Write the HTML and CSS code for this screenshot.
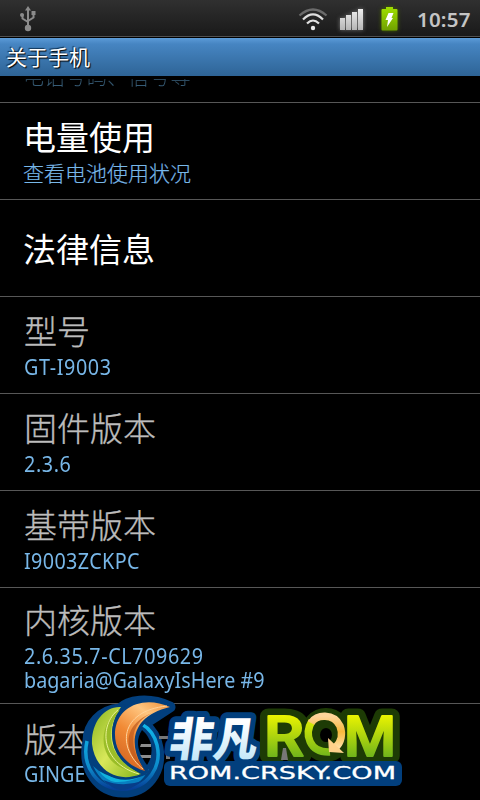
FILE: index.html
```html
<!DOCTYPE html>
<html lang="zh-CN">
<head>
<meta charset="utf-8">
<title>关于手机</title>
<link rel="stylesheet" href="styles.css">
</head>
<body>
<div class="phone">
  <header class="status">
    <svg class="usb" width="18" height="28" viewBox="0 0 18 28">
      <g fill="none" stroke="#8b8b8b" stroke-width="2"><path d="M9 5V23M3.500 10v4.500L9 18M14.500 9v4.500L9 17"/></g>
      <g fill="#8b8b8b"><path d="M9 2l3 4.500H6z"/><circle cx="9" cy="24" r="3.200"/><circle cx="3" cy="11" r="2"/><path d="M12.500 7h4v4h-4z"/></g>
    </svg>
    <svg class="wifi" width="30" height="24" viewBox="0 0 30 24">
      <g fill="none" stroke-width="2.200"><path stroke="#6b6b6b" d="M1.500 7.500Q15-4.500 28.500 7.500"/><path stroke="#e0e0e0" d="M5 11.500Q15 1.500 25 11.500M9 15.500Q15 9.500 21 15.500"/></g><circle cx="15" cy="20" r="2.200" fill="#e8e8e8"/>
    </svg>
    <svg class="signal" width="24" height="23" viewBox="0 0 24 23"><path fill="url(#bar)" d="M0 11h5v12H0zM6 8h5v15H6zM12 5h5v18h-5zM18 2h5v21h-5z"/><defs><linearGradient id="bar" x2="0" y2="1"><stop stop-color="#eee"/><stop offset="1" stop-color="#b5b5b5"/></linearGradient></defs></svg>
    <svg class="battery" width="17" height="24" viewBox="0 0 17 24"><defs><linearGradient id="bat" x2="0" y2="1"><stop stop-color="#a0e000"/><stop offset="1" stop-color="#6fa000"/></linearGradient></defs><path fill="url(#bat)" d="M5 0h7v2h3.500q1 0 1 1v19.500q0 1-1 1h-14q-1 0-1-1V3q0-1 1-1H5z"/><path fill="#fff" d="M7.500 6h5l-2 5H12l-6 9 1-7H4.500z"/></svg>
    <span class="clock">10:57</span>
  </header>
  <h1 class="title">关于手机</h1>
  <main class="list">
    <section class="row peek"><p class="sub cjk">电话号码、信号等</p></section>
    <section class="row"><h2 class="on">电量使用</h2><p class="sub cjk">查看电池使用状况</p></section>
    <section class="row single"><h2 class="on">法律信息</h2></section>
    <section class="row"><h2>型号</h2><p class="sub wide">GT-I9003</p></section>
    <section class="row"><h2>固件版本</h2><p class="sub wide">2.3.6</p></section>
    <section class="row"><h2>基带版本</h2><p class="sub mid">I9003ZCKPC</p></section>
    <section class="row kernel"><h2>内核版本</h2><p class="sub"><span class="wide">2.6.35.7-CL709629</span><br>bagaria@GalaxyIsHere #9</p></section>
    <section class="row last"><h2>版本</h2><p class="sub">GINGE</p></section>
  </main>
  <svg class="mark" width="330" height="110" viewBox="80 690 330 110">
    <defs>
      <linearGradient id="green" x2="1" y2="1"><stop stop-color="#89b51d"/><stop offset=".5" stop-color="#d8e85a"/><stop offset="1" stop-color="#86b51b"/></linearGradient>
      <linearGradient id="orange" x1="1" y1="0" x2=".4" y2="1"><stop stop-color="#ee8d35"/><stop offset=".3" stop-color="#ffc680"/><stop offset=".65" stop-color="#f18a35"/><stop offset="1" stop-color="#d86a24"/></linearGradient>
      <linearGradient id="ring" x2="0" y2="1"><stop stop-color="#10b5ea"/><stop offset=".65" stop-color="#0d8dcc"/><stop offset="1" stop-color="#063e96"/></linearGradient>
      <linearGradient id="ice" x2="0" y2="1"><stop offset=".3" stop-color="#fff"/><stop offset="1" stop-color="#b5e2f7"/></linearGradient>
      <linearGradient id="lime" gradientUnits="userSpaceOnUse" x1="0" y1="714" x2="0" y2="757"><stop stop-color="#eef500"/><stop offset="1" stop-color="#70b51b"/></linearGradient>
      <linearGradient id="gold" x2="0" y2="1"><stop stop-color="#ffd49a"/><stop offset=".5" stop-color="#f7b83c"/><stop offset="1" stop-color="#ffdda0"/></linearGradient>
    </defs>
    <g fill="#023f7d" stroke="#023f7d" stroke-width="11" stroke-linejoin="round">
      <path d="M88 741C82 770 99 792 123 792 147 792 162 772 158 748 156 735 149 728 144 724L170 707C148 697 128 701 120 709 101 710 88 725 88 741z"/>
    </g>
    <path fill="#000" d="M142 730C134 742 139 754 147 765 155 753 152 738 142 730z"/>
    <path fill="#8d8d8d" d="M141 744h10v3h-11zM140 755h11v3h-9z"/>
    <path fill="#777" d="M159 736h9v3h-9zM166 755h4v4h-4z"/>
    <path fill="none" stroke="url(#ring)" stroke-width="3.500" d="M87 741C81 768 99 789 122 789 149 789 162 766 157 745 155 736 149 728 143 725"/>
    <path fill="#087fc0" d="M93 766Q119 791 149 769Q140 787 122 789Q103 787 93 766z"/>
    <path fill="#10b2dd" d="M99 771Q122 785 146 774Q130 783 115 782Q105 780 99 771z"/>
    <path fill="#073d89" d="M103 780Q122 788 142 781Q132 790 120 790Q111 788 103 780z"/>
    <path fill="url(#green)" stroke="#023f7d" stroke-width="5" paint-order="stroke" d="M121 707C104 706 91 723 92 744 95 769 116 784 141 774 114 761 103 733 121 707z"/>
    <path fill="#9abd28" d="M120 710C104 729 108 758 139 773Q115 769 108 756C98 739 106 717 120 710z"/>
    <path fill="none" stroke="#eaf395" d="M118 710C99 725 100 763 139 774"/>
    <path fill="url(#orange)" stroke="#023f7d" stroke-width="6" paint-order="stroke" stroke-linejoin="round" d="M170 707C144 695 117 706 115 732 114 753 128 766 145 771 127 745 131 716 170 707z"/>
    <path fill="#b95318" opacity=".65" d="M155 712C132 720 125 743 145 771 123 753 120 724 155 712z"/>
    <path fill="none" stroke="#ffd39b" d="M167 706C119 711 117 748 143 769"/>
    <g class="chinese">
      <text x="168" y="756" textLength="88" lengthAdjust="spacingAndGlyphs" class="brand edge" transform="skewX(-8)">非凡</text>
    </g>
    <text class="rom rim"><tspan x="264" y="756" textLength="40" lengthAdjust="spacingAndGlyphs">R</tspan><tspan x="344" y="756" textLength="52" lengthAdjust="spacingAndGlyphs">M</tspan></text>
    <ellipse cx="326" cy="735" rx="16" ry="17" fill="none" stroke="#1d3b05" stroke-width="20"/>
    <text class="rom"><tspan x="264" y="756" textLength="40" lengthAdjust="spacingAndGlyphs">R</tspan><tspan x="344" y="756" textLength="52" lengthAdjust="spacingAndGlyphs">M</tspan></text>
    <path fill="none" stroke="url(#lime)" stroke-width="7.500" d="M312 721C304 734 309 753 330 752"/>
    <path fill="none" stroke="url(#gold)" stroke-width="7.500" d="M311 723C316 714 334 713 340 726 343 734 341 742 336 747"/>
    <path fill="#ffd18a" d="M328 738l16 15-15-1z"/>
    <path fill="#777" d="M283 748h3l2 12h-7z"/>
    <rect x="164" y="761" width="238" height="25" rx="6" fill="#023f7d"/>
    <text x="169" y="779" class="site" textLength="227" lengthAdjust="spacingAndGlyphs">ROM.CRSKY.COM</text>
  </svg>
</div>
</body>
</html>
```
FILE: styles.css
```css
* { box-sizing: border-box; }
body { margin: 0; background: #000; }
h1, h2, p { margin: 0; font-weight: 400; }
.phone { position: relative; width: 480px; height: 800px; overflow: hidden; display: flex; flex-direction: column; background: #000; font-family: "Noto Sans", "Noto Sans CJK SC", sans-serif; }
.status { height: 38px; flex: none; display: flex; align-items: flex-start; background: linear-gradient(#303030, #1a1a1a 35px, #1a1a1a); border-bottom: 1px solid #000; box-shadow: inset 0 -1px #505050; }
.usb { margin: 4px 0 0 19px; }
.wifi { margin: 8px 0 0 261px; }
.signal { margin: 7px 0 0 12px; filter: drop-shadow(0 0 2px #777); }
.battery { margin: 7px 0 0 17px; filter: drop-shadow(0 0 2px #486500); }
.clock { margin-left: 19px; font: 600 20.500px/39px "Noto Sans", sans-serif; letter-spacing: .2px; color: #c4c4c4; white-space: nowrap; }
.title { height: 38px; flex: none; padding-left: 6px; font: 400 21px/36px "Noto Sans CJK SC", sans-serif; color: #fff; text-shadow: 1px 1px 1px #000, -1px -1px 1px #123456; background: linear-gradient(#5b9bd8 0, #4685c2 6px, #2e6496 100%); }
.list { flex: 1; min-height: 0; overflow: hidden; }
.row { height: 97px; padding: 13px 24px 0; border-bottom: 1px solid #575757; overflow: hidden; }
.row h2 { font: 300 33px/40px "Noto Sans CJK SC", sans-serif; color: #bcbcbc; height: 40px; -webkit-text-stroke: .35px #bcbcbc; }
.row h2.on { color: #fff; font-weight: 400; margin-left: -1px; -webkit-text-stroke: 0; }
.sub { font-size: 21px; line-height: 24px; color: #78b7e8; margin-top: 5px; white-space: nowrap; transform: scaleX(.94); transform-origin: 0 0; }
.wide { letter-spacing: .65px; }
.mid { letter-spacing: .4px; }
.sub.cjk { font-family: "Noto Sans CJK SC", sans-serif; font-weight: 300; margin: 4px 0 0 -1px; transform: none; -webkit-text-stroke: .2px #78b7e8; }
.row.peek { height: 27px; padding-top: 0; }
.peek .sub.cjk { margin-top: -13px; -webkit-text-stroke: 0; background: linear-gradient(transparent 16px, #294457 16px, #39617d); -webkit-background-clip: text; background-clip: text; color: transparent; }
.row.single { padding-top: 28px; }
.row.kernel { height: 116px; padding-top: 11px; }
.row.last { padding-top: 14px; border: 0; }
.row.last .sub { margin-top: 4px; }
.mark { position: absolute; left: 80px; top: 690px; overflow: visible; }
.brand { font: 900 46px "Noto Sans CJK SC", sans-serif; fill: url(#ice); }
.chinese { transform: translateX(106px); }
.edge { stroke: #023f7d; stroke-width: 12px; stroke-linejoin: round; paint-order: stroke; }
.rom { font: 500 55px Roboto, sans-serif; fill: url(#lime); stroke: url(#lime); stroke-width: 2px; stroke-linejoin: round; }
.rom.rim { stroke: #1d3b05; stroke-width: 15px; }
.site { font: 400 17px "DejaVu Sans", sans-serif; fill: #fff; stroke: #fff; stroke-width: .3px; }
```
